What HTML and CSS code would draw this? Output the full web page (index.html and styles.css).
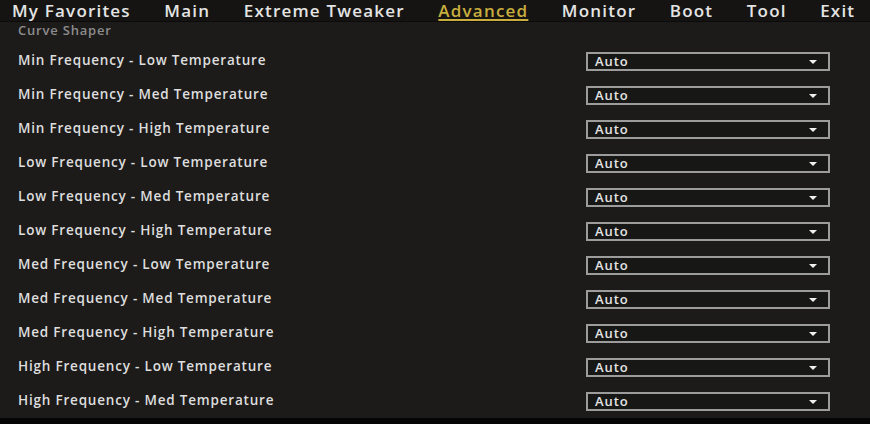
FILE: index.html
```html
<!DOCTYPE html>
<html>
<head>
<meta charset="utf-8">
<link rel="stylesheet" href="styles.css">
</head>
<body>
<div class="screen">
  <nav class="menu">
    <span class="tab">My Favorites</span>
    <span class="tab">Main</span>
    <span class="tab">Extreme Tweaker</span>
    <span class="tab active">Advanced</span>
    <span class="tab">Monitor</span>
    <span class="tab">Boot</span>
    <span class="tab">Tool</span>
    <span class="tab">Exit</span>
  </nav>
  <main class="content">
    <div class="caption">Curve Shaper</div>
    <div class="row"><span class="label">Min Frequency - Low Temperature</span><div class="select"><span>Auto</span><i class="arrow"></i></div></div>
    <div class="row"><span class="label">Min Frequency - Med Temperature</span><div class="select"><span>Auto</span><i class="arrow"></i></div></div>
    <div class="row"><span class="label">Min Frequency - High Temperature</span><div class="select"><span>Auto</span><i class="arrow"></i></div></div>
    <div class="row"><span class="label">Low Frequency - Low Temperature</span><div class="select"><span>Auto</span><i class="arrow"></i></div></div>
    <div class="row"><span class="label">Low Frequency - Med Temperature</span><div class="select"><span>Auto</span><i class="arrow"></i></div></div>
    <div class="row"><span class="label">Low Frequency - High Temperature</span><div class="select"><span>Auto</span><i class="arrow"></i></div></div>
    <div class="row"><span class="label">Med Frequency - Low Temperature</span><div class="select"><span>Auto</span><i class="arrow"></i></div></div>
    <div class="row"><span class="label">Med Frequency - Med Temperature</span><div class="select"><span>Auto</span><i class="arrow"></i></div></div>
    <div class="row"><span class="label">Med Frequency - High Temperature</span><div class="select"><span>Auto</span><i class="arrow"></i></div></div>
    <div class="row"><span class="label">High Frequency - Low Temperature</span><div class="select"><span>Auto</span><i class="arrow"></i></div></div>
    <div class="row"><span class="label">High Frequency - Med Temperature</span><div class="select"><span>Auto</span><i class="arrow"></i></div></div>
  </main>
  <div class="footer"></div>
</div>
</body>
</html>
```
FILE: styles.css
```css
html, body {
  margin: 0;
  padding: 0;
  background: #000;
}
.screen {
  width: 870px;
  height: 424px;
  overflow: hidden;
  display: flex;
  flex-direction: column;
  background: #1c1b1a;
  font-family: "Open Sans", "DejaVu Sans", sans-serif;
}
.menu {
  height: 21px;
  flex: none;
  display: flex;
  align-items: center;
  gap: 33.5px;
  padding-left: 12px;
  background: #151412;
  border-bottom: 1px solid #0b0b0b;
  position: relative;
  z-index: 1;
}
.tab {
  font-size: 17px;
  font-weight: 600;
  line-height: 21px;
  color: #e4e4e4;
  letter-spacing: 1.2px;
  margin-top: -1px;
}
.tab.active {
  color: #c9ae3e;
  text-decoration: underline;
  text-decoration-thickness: 2px;
  text-underline-offset: 2px;
}
.content {
  height: 396px;
  flex: none;
  display: flex;
  flex-direction: column;
}
.caption {
  box-sizing: border-box;
  height: 22px;
  padding-left: 18px;
  padding-top: 1px;
  font-size: 13px;
  font-weight: 600;
  line-height: 14px;
  letter-spacing: 0.8px;
  color: #8c8c8c;
}
.row {
  height: 34px;
  display: flex;
  align-items: center;
  padding-left: 18px;
}
.label {
  flex: 1;
  font-size: 13.5px;
  font-weight: 600;
  letter-spacing: 0.8px;
  color: #dedede;
  margin-top: -2px;
}
.select {
  width: 222px;
  height: 15px;
  margin-right: 40px;
  border: 2px solid #9c9c9c;
  background: #171716;
  display: flex;
  align-items: center;
  justify-content: space-between;
  padding: 0 11px 0 7px;
  font-size: 13px;
  font-weight: 600;
  letter-spacing: 0.9px;
  color: #e4e4e4;
  line-height: 15px;
}
.arrow {
  width: 0;
  height: 0;
  border-left: 4px solid transparent;
  border-right: 4px solid transparent;
  border-top: 4px solid #f0f0f0;
  margin-top: 1px;
}
.footer {
  flex: 1;
  background: #050505;
}
```
